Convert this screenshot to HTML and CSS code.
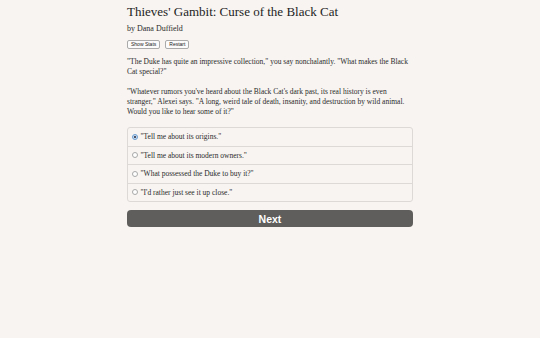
FILE: index.html
```html
<!DOCTYPE html>
<html>
<head>
<meta charset="utf-8">
<link rel="stylesheet" href="styles.css">
</head>
<body>
<div class="page">
  <h1 class="title">Thieves' Gambit: Curse of the Black Cat</h1>
  <div class="author">by Dana Duffield</div>
  <div class="buttons">
    <button class="small-btn">Show Stats</button>
    <button class="small-btn">Restart</button>
  </div>
  <p class="para">"The Duke has quite an impressive collection," you say nonchalantly. "What makes the Black Cat special?"</p>
  <p class="para">"Whatever rumors you've heard about the Black Cat's dark past, its real history is even stranger," Alexei says. "A long, weird tale of death, insanity, and destruction by wild animal. Would you like to hear some of it?"</p>
  <div class="choices">
    <label class="choice"><span class="radio checked"></span>"Tell me about its origins."</label>
    <label class="choice"><span class="radio"></span>"Tell me about its modern owners."</label>
    <label class="choice"><span class="radio"></span>"What possessed the Duke to buy it?"</label>
    <label class="choice"><span class="radio"></span>"I'd rather just see it up close."</label>
  </div>
  <button class="next">Next</button>
</div>
</body>
</html>
```
FILE: styles.css
```css
html, body {
  margin: 0;
  padding: 0;
  background: #f7f4f1;
}
body {
  font-family: "Palatino Linotype", "Book Antiqua", "Liberation Serif", serif;
  color: #2b2b2b;
}
.page {
  width: 286px;
  margin: 0 auto;
  padding-top: 4px;
}
.title {
  font-size: 13px;
  font-weight: normal;
  margin: 0;
  line-height: 16px;
  color: #1e1e1e;
}
.author {
  font-size: 8px;
  line-height: 10px;
  margin-top: 4px;
}
.buttons {
  display: flex;
  gap: 5px;
  margin-top: 6px;
}
.small-btn {
  font-family: "Liberation Sans", sans-serif;
  font-size: 5px;
  height: 9px;
  padding: 0 3px;
  border: 1px solid #aaa;
  border-radius: 2px;
  background: #fbfbfb;
  color: #222;
  line-height: 7px;
}
.para {
  font-size: 7.5px;
  line-height: 10px;
  margin: 7.5px 0 0;
}
.para + .para {
  margin-top: 10px;
}
.choices {
  margin-top: 10.5px;
  border: 1px solid #dcd9d6;
  border-radius: 3px;
  display: flex;
  flex-direction: column;
}
.choice {
  display: flex;
  align-items: center;
  gap: 2.5px;
  height: 17.5px;
  padding-left: 4px;
  font-size: 7.5px;
  border-top: 1px solid #dcd9d6;
}
.choice:first-child {
  border-top: none;
}
.radio {
  width: 4px;
  height: 4px;
  border: 1px solid #a9a9a9;
  border-radius: 50%;
  background: #fff;
  position: relative;
  flex: none;
}
.radio.checked {
  border-color: #6d9ecf;
  background: #c9def3;
}
.radio.checked::after {
  content: "";
  position: absolute;
  left: 1px;
  top: 1px;
  width: 2px;
  height: 2px;
  border-radius: 50%;
  background: #223;
}
.next {
  display: block;
  width: 100%;
  height: 17px;
  margin-top: 8px;
  background: #5f5e5c;
  border: none;
  border-radius: 4px;
  color: #fff;
  font-family: "Liberation Sans", sans-serif;
  font-weight: bold;
  font-size: 10.5px;
  padding: 0;
}
```
